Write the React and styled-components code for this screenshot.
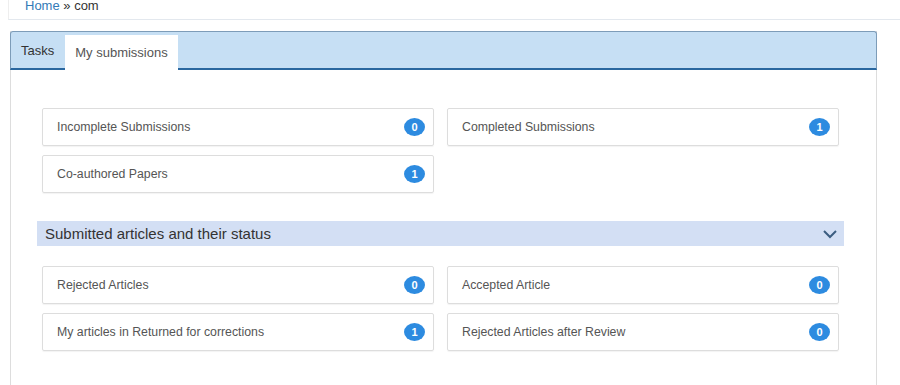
import React from "react";
import styled, { createGlobalStyle } from "styled-components";

const Global = createGlobalStyle`
  body {
    margin: 0;
    background: #fff;
    font-family: "Liberation Sans", Arial, sans-serif;
    font-size: 13px;
    color: #555;
  }
`

const Breadcrumb = styled.div`
  margin-left: 8px;
  height: 20px;
  box-sizing: border-box;
  border-left: 1px solid #eee;
  border-bottom: 1px solid #e3e8ee;
  padding-left: 16px;
  line-height: 11px;
  color: #333;
  a {
    color: #337ab7;
    text-decoration: none;
  }
`

const Panel = styled.div`
  margin: 11px 0 0 10px;
  width: 867px;
  box-sizing: border-box;
  border-left: 1px solid #ddd;
  border-right: 1px solid #ddd;
  height: 360px;
`

const TabBar = styled.div`
  display: flex;
  align-items: flex-end;
  height: 39px;
  box-sizing: border-box;
  margin: 0 -1px;
  background: #c6dff4;
  border: 1px solid #7d9cb8;
  border-bottom: 2px solid #2a679f;
  border-radius: 3px 3px 0 0;
`

const Tab = styled.div`
  height: ${p => (p.$active ? "35px" : "36px")};
  margin-bottom: ${p => (p.$active ? "-2px" : "0")};
  padding: 0 10px;
  margin-right: 1px;
  display: flex;
  align-items: center;
  background: ${p => (p.$active ? "#fff" : "transparent")};
  color: ${p => (p.$active ? "#555" : "#333")};
  line-height: 34px;
  box-sizing: border-box;
  span {
    position: relative;
    top: ${p => (p.$active ? "0" : "1px")};
  }
`

const Body = styled.div`
  width: 807px;
  margin-left: 26px;
  padding-top: 38px;
`

const Grid = styled.div`
  display: grid;
  grid-template-columns: 1fr 1fr;
  column-gap: 13px;
  row-gap: 9px;
  padding: 0 5px;
`

const Card = styled.div`
  height: 38px;
  box-sizing: border-box;
  border: 1px solid #ddd;
  border-radius: 2px;
  box-shadow: 0 1px 1px rgba(0, 0, 0, 0.05);
  display: flex;
  align-items: center;
  justify-content: space-between;
  padding: 0 8px 0 14px;
  font-size: 12.3px;
  color: #555;
`

const Badge = styled.span`
  width: 21px;
  height: 18px;
  border-radius: 50%;
  background: #2d8be0;
  color: #fff;
  font-size: 11px;
  font-weight: bold;
  display: flex;
  align-items: center;
  justify-content: center;
`

const Section = styled.div`
  margin: 28px 0 20px;
  height: 25px;
  background: #d3dff4;
  display: flex;
  align-items: center;
  justify-content: space-between;
  padding: 0 6px 0 8px;
  font-size: 15px;
  color: #333;
`

const Chevron = () => (
  <svg width="16" height="10" viewBox="0 0 16 10">
    <path d="M2 2 L8 8 L14 2" fill="none" stroke="#3b5d80" strokeWidth="2" />
  </svg>
)

const top = [
  ["Incomplete Submissions", 0],
  ["Completed Submissions", 1],
  ["Co-authored Papers", 1],
]

const bottom = [
  ["Rejected Articles", 0],
  ["Accepted Article", 0],
  ["My articles in Returned for corrections", 1],
  ["Rejected Articles after Review", 0],
]

export default function App() {
  return (
    <>
      <Global />
      <Breadcrumb>
        <a href="#">Home</a> » com
      </Breadcrumb>
      <Panel>
        <TabBar>
          <Tab><span>Tasks</span></Tab>
          <Tab $active><span>My submissions</span></Tab>
        </TabBar>
        <Body>
          <Grid>
            {top.map(([label, n]) => (
              <Card key={label}>
                {label}
                <Badge>{n}</Badge>
              </Card>
            ))}
          </Grid>
          <Section>
            Submitted articles and their status
            <Chevron />
          </Section>
          <Grid>
            {bottom.map(([label, n]) => (
              <Card key={label}>
                {label}
                <Badge>{n}</Badge>
              </Card>
            ))}
          </Grid>
        </Body>
      </Panel>
    </>
  )
}
